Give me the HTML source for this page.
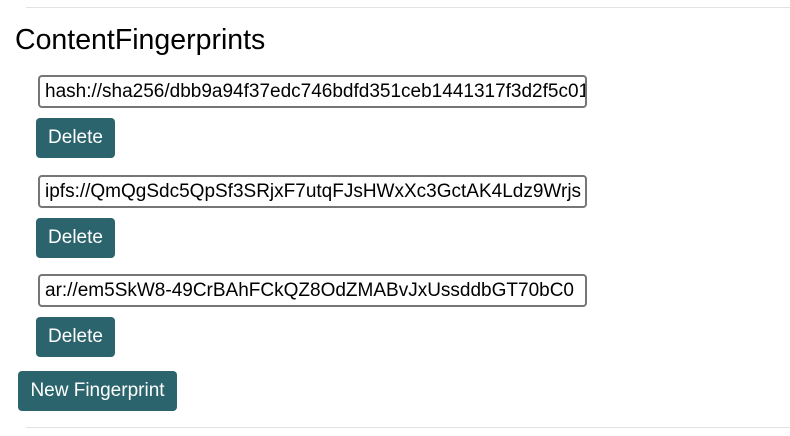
<!DOCTYPE html>
<html><head><style>
body{margin:0;width:790px;height:436px;background:#fff;font-family:"Liberation Sans",sans-serif;position:relative;overflow:hidden}
.hr{position:absolute;left:26px;right:0;height:1px;background:#e3e3e3}
h2{position:absolute;left:15px;top:24px;margin:0;font-size:28.5px;font-weight:normal;color:#000}
.in{position:absolute;left:38px;width:540px;height:29px;border:2px solid #767676;border-radius:4px;font-size:19px;line-height:29px;padding-left:5px;overflow:hidden;white-space:nowrap;color:#000}
.btn{position:absolute;background:#2b646c;color:#fff;border-radius:4px;font-size:19px;height:40px;line-height:40px;text-align:center;white-space:nowrap}
</style></head><body>
<div class="hr" style="top:7px"></div>
<h2>ContentFingerprints</h2>
<div class="in" style="top:75px">hash://sha256/dbb9a94f37edc746bdfd351ceb1441317f3d2f5c01</div>
<div class="btn" style="left:36px;top:118px;width:79px">Delete</div>
<div class="in" style="top:175px">ipfs://QmQgSdc5QpSf3SRjxF7utqFJsHWxXc3GctAK4Ldz9Wrjs</div>
<div class="btn" style="left:36px;top:218px;width:79px">Delete</div>
<div class="in" style="top:274px">ar://em5SkW8-49CrBAhFCkQZ8OdZMABvJxUssddbGT70bC0</div>
<div class="btn" style="left:36px;top:317px;width:79px">Delete</div>
<div class="btn" style="left:18px;top:371px;width:159px">New Fingerprint</div>
<div class="hr" style="top:427px"></div>
</body></html>
